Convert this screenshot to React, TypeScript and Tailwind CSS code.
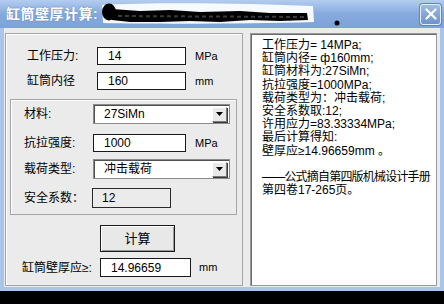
import React from "react";

const FONT = { fontFamily: '"Liberation Sans", "Noto Sans CJK SC", sans-serif' };

function TextBox({ value, width }: { value: string; width: string }) {
  return (
    <div className={`${width} h-full border border-[#1a1a1a] bg-white flex items-center pl-[10px] text-[12px] text-black`}>
      {value}
    </div>
  );
}

function Combo({ value }: { value: string }) {
  return (
    <div className="w-[137px] h-[20px] border border-[#8a8a8a] shadow-[inset_1px_1px_0_#505050] bg-white flex items-center">
      <span className="flex-1 pl-[10px] text-[12px] text-black">{value}</span>
      <div className="w-[15px] h-[15px] mr-[2px] bg-[#e9e9e9] border border-t-white border-l-white border-b-[#7a7a7a] border-r-[#7a7a7a] shadow-[1px_1px_0_#3a3a3a] flex items-center justify-center">
        <svg width="7" height="4" viewBox="0 0 7 4">
          <path d="M0 0 H7 L3.5 4 Z" fill="#000" />
        </svg>
      </div>
    </div>
  );
}

function TitleBar() {
  return (
    <div className="relative h-[28px] flex items-center bg-gradient-to-b from-[#b3cdf0] via-[#86aade] to-[#7ca2d8]">
      <span className="pl-[6px] pt-[1px] text-[14px] font-bold text-white tracking-[0.5px] [text-shadow:0_0_2px_#5a80b8]">
        缸筒壁厚计算:
      </span>
      {/* redacted part of the title */}
      <svg className="absolute left-0 top-0 pointer-events-none" width="444" height="28" viewBox="0 0 444 28">
        <path d="M102 5 C150 2 250 3 313 6 L314 22 C250 24 150 24 103 23 Z" fill="#fff" opacity="0.92" />
        <ellipse cx="109" cy="12" rx="7" ry="8.5" fill="#000" />
        <path
          d="M112 9 L140 11 L170 10 L200 12 L240 11 L270 13 L307 13 L308 20 L280 21 L250 20 L220 22 L190 21 L160 22 L130 22 L112 20 Z"
          fill="#000"
        />
        <path d="M118 16 L304 17" stroke="#3a3a3a" strokeWidth="2" strokeDasharray="4 3" />
        <circle cx="337" cy="23" r="2.5" fill="#000" />
      </svg>
      <div className="ml-auto mr-[3px] w-[21px] h-[21px] rounded-[3px] border border-[#e6eefa] bg-gradient-to-b from-[#9dbbe6] to-[#6d93cc] shadow-[0_0_0_1px_#5f84bd] flex items-center justify-center">
        <svg width="12" height="12" viewBox="0 0 12 12">
          <path d="M1.5 1.5 L10.5 10.5 M10.5 1.5 L1.5 10.5" stroke="#fff" strokeWidth="2.2" strokeLinecap="round" />
        </svg>
      </div>
    </div>
  );
}

const report = [
  "工作压力= 14MPa;",
  "缸筒内径= ф160mm;",
  "缸筒材料为:27SiMn;",
  "抗拉强度=1000MPa;",
  "载荷类型为：冲击载荷;",
  "安全系数取:12;",
  "许用应力=83.33334MPa;",
  "最后计算得知:",
  "壁厚应≥14.96659mm 。",
  "\u00a0",
];

export default function App() {
  return (
    <div className="w-[444px] h-[304px] bg-black overflow-hidden" style={FONT}>
      <div className="h-[291px] flex flex-col bg-[#aac5ea]">
        <TitleBar />
        <div className="flex-1 mx-[4px] mb-[4px] bg-[#ebebeb] flex gap-[7px] pt-[5px] pl-[1px]">
          {/* left form panel */}
          <div className="w-[238px] h-[253px] border border-[#a5a5a5] shadow-[inset_1px_1px_0_#fff] flex flex-col text-[12px] text-black">
            <div className="mt-[13px] h-[18px] flex items-center">
              <span className="w-[91px] pl-[21px]">工作压力:</span>
              <TextBox value="14" width="w-[89px]" />
              <span className="ml-[9px] text-[11px]">MPa</span>
            </div>
            <div className="mt-[7px] h-[18px] flex items-center">
              <span className="w-[91px] pl-[21px]">缸筒内径</span>
              <TextBox value="160" width="w-[89px]" />
              <span className="ml-[9px] text-[11px]">mm</span>
            </div>

            {/* inner group */}
            <div className="mt-[9px] ml-[4px] mr-[5px] h-[116px] border border-[#a5a5a5] shadow-[inset_1px_1px_0_#fff] flex flex-col pt-[4px]">
              <div className="h-[20px] flex items-center">
                <span className="w-[82px] pl-[13px]">材料:</span>
                <Combo value="27SiMn" />
              </div>
              <div className="mt-[10px] h-[18px] flex items-center">
                <span className="w-[82px] pl-[13px]">抗拉强度:</span>
                <TextBox value="1000" width="w-[93px]" />
                <span className="ml-[9px] text-[11px]">MPa</span>
              </div>
              <div className="mt-[7px] h-[20px] flex items-center">
                <span className="w-[82px] pl-[13px]">载荷类型:</span>
                <Combo value="冲击载荷" />
              </div>
              <div className="mt-[9px] h-[20px] flex items-center">
                <span className="w-[81px] pl-[13px]">安全系数：</span>
                <div className="w-[79px] h-full border border-[#2a2a2a] flex items-center pl-[9px]">12</div>
              </div>
            </div>

            <div className="mt-[10px] flex">
              <button className="ml-[94px] w-[75px] h-[27px] border border-[#1a1a1a] bg-[#e8e8e8] shadow-[inset_1px_1px_0_#fff,inset_-1px_-1px_0_#9a9a9a] text-[13px]">
                计算
              </button>
            </div>

            <div className="mt-[6px] h-[19px] flex items-center">
              <span className="w-[94px] pl-[16px] whitespace-nowrap">缸筒壁厚应≥:</span>
              <TextBox value="14.96659" width="w-[91px]" />
              <span className="ml-[8px] text-[11px]">mm</span>
            </div>
          </div>

          {/* right report panel */}
          <div className="w-[187px] h-[253px] border border-[#9a9a9a] shadow-[inset_1px_1px_0_#6a6a6a] bg-white pl-[11px] pt-[5px] text-[12px] leading-[13.2px] text-black overflow-hidden">
            {report.map((line, i) => (
              <div key={i} className="whitespace-nowrap">
                {line}
              </div>
            ))}
            <div className="whitespace-nowrap tracking-[-0.8px]">——公式摘自第四版机械设计手册</div>
            <div className="whitespace-nowrap">第四卷17-265页。</div>
          </div>
        </div>
      </div>
    </div>
  );
}
